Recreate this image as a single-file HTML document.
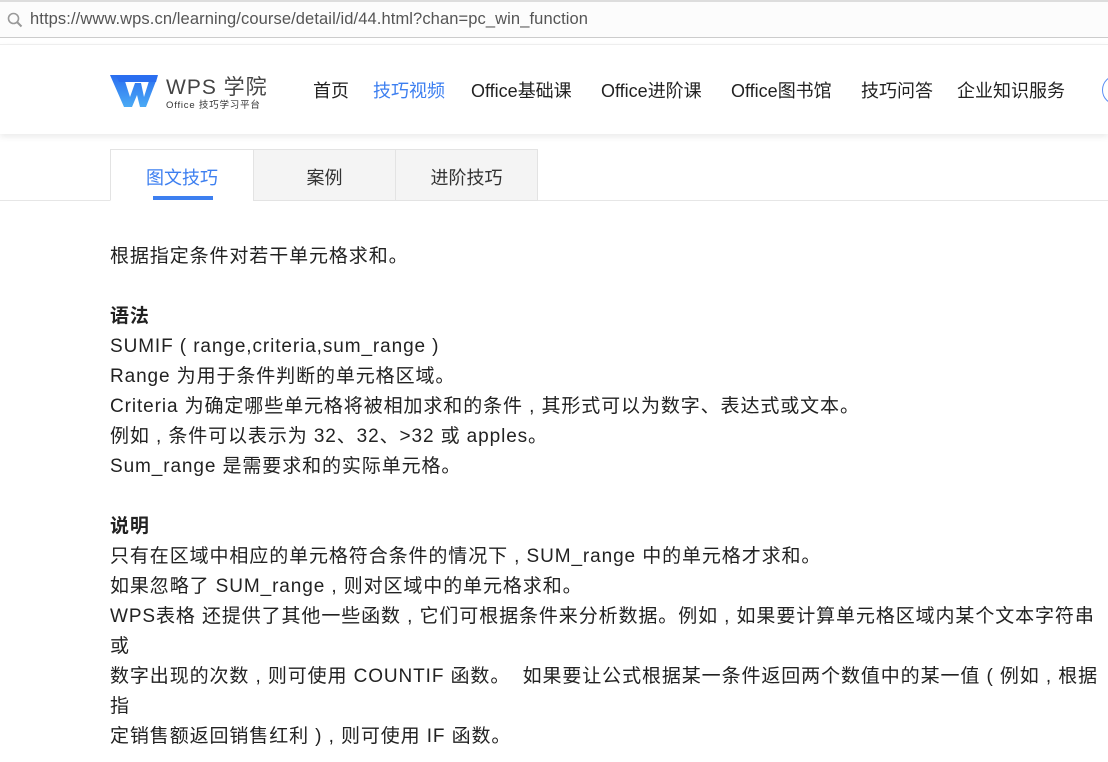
<!DOCTYPE html>
<html><head><meta charset="utf-8">
<style>
*{margin:0;padding:0;box-sizing:border-box}
html,body{width:1108px;height:762px;overflow:hidden;background:#fff;font-family:"Liberation Sans","Noto Sans CJK SC",sans-serif;color:#222}
.url{position:absolute;left:0;top:0;width:1108px;height:38px;background:#fcfcfc;border-top:2px solid #ddd;border-bottom:1px solid #ccc}
.url span{position:absolute;left:30px;top:8px;font-size:16.5px;color:#555;letter-spacing:0.1px}
.url svg{position:absolute;left:7px;top:10px}
.hdr{position:absolute;left:0;top:44px;width:1108px;height:90px;background:#fff;box-shadow:0 3px 6px rgba(0,0,0,0.08);border-top:1px solid #eee}
.nav{position:absolute;top:32px;font-size:18px;color:#222;white-space:nowrap}
.tabs{position:absolute;left:110px;top:149px;height:52px}
.tab{position:absolute;top:0;height:52px;border:1px solid #e3e3e3;background:#f4f4f4;font-size:18px;text-align:center;line-height:56px;color:#333}
.line{position:absolute;left:0;top:200px;width:1108px;height:1px;background:#e6e6e6}
.c{position:absolute;left:110px;font-size:19px;line-height:30px;white-space:nowrap;color:#222;letter-spacing:0.9px}
b{font-weight:bold}
</style></head><body>
<div class="url">
<svg width="16" height="16" viewBox="0 0 16 16"><circle cx="6.5" cy="6.5" r="5" fill="none" stroke="#999" stroke-width="1.6"/><line x1="10" y1="10" x2="14.5" y2="14.5" stroke="#999" stroke-width="2"/></svg>
<span>https://www.wps.cn/learning/course/detail/id/44.html?chan=pc_win_function</span></div>
<div class="hdr">
<svg style="position:absolute;left:110px;top:28px" width="50" height="36" viewBox="0 0 50 36">
<defs><linearGradient id="g" x1="0" y1="0" x2="0" y2="1"><stop offset="0" stop-color="#2a6ef0"/><stop offset="1" stop-color="#4aaaf5"/></linearGradient></defs>
<path d="M0 2 H13 L20 24 L25 10 H31 L34 24 L39 8 H46 L36 34 H30 L27 22 L22 34 H14 Z" fill="url(#g)"/>
<path d="M6 2 H48 L46 9 H9 Z" fill="#2a6ef0"/>
</svg>
<div style="position:absolute;left:166px;top:26px;font-size:21px;color:#444;letter-spacing:1px">WPS 学院</div>
<div style="position:absolute;left:166px;top:52px;font-size:9.5px;color:#333;letter-spacing:0.8px">Office 技巧学习平台</div>
<div class="nav" style="left:313px">首页</div>
<div class="nav" style="left:373px;color:#3d7ff0">技巧视频</div>
<div class="nav" style="left:471px">Office基础课</div>
<div class="nav" style="left:601px">Office进阶课</div>
<div class="nav" style="left:731px">Office图书馆</div>
<div class="nav" style="left:861px">技巧问答</div>
<div class="nav" style="left:957px">企业知识服务</div>
<div style="position:absolute;left:1102px;top:30px;width:30px;height:30px;border:1.5px solid #5b8ff5;border-radius:50%"></div>
</div>
<div class="line"></div>
<div class="tabs">
<div class="tab" style="left:0;width:144px;background:#fff;border-bottom:1px solid #fff;color:#3d7ff0">图文技巧<div style="position:absolute;left:42px;top:46px;width:60px;height:4px;background:#3d7ff0"></div></div>
<div class="tab" style="left:143px;width:143px">案例</div>
<div class="tab" style="left:285px;width:143px">进阶技巧</div>
</div>
<div class="c" style="top:242px">根据指定条件对若干单元格求和。</div>
<div class="c" style="top:302px"><b>语法</b></div>
<div class="c" style="top:332px">SUMIF ( range,criteria,sum_range )</div>
<div class="c" style="top:362px">Range 为用于条件判断的单元格区域。</div>
<div class="c" style="top:392px">Criteria 为确定哪些单元格将被相加求和的条件 , 其形式可以为数字、表达式或文本。</div>
<div class="c" style="top:422px">例如 , 条件可以表示为 32、32、&gt;32 或 apples。</div>
<div class="c" style="top:452px">Sum_range 是需要求和的实际单元格。</div>
<div class="c" style="top:512px"><b>说明</b></div>
<div class="c" style="top:542px">只有在区域中相应的单元格符合条件的情况下 , SUM_range 中的单元格才求和。</div>
<div class="c" style="top:572px">如果忽略了 SUM_range , 则对区域中的单元格求和。</div>
<div class="c" style="top:602px">WPS表格 还提供了其他一些函数 , 它们可根据条件来分析数据。例如 , 如果要计算单元格区域内某个文本字符串</div>
<div class="c" style="top:632px">或</div>
<div class="c" style="top:662px">数字出现的次数 , 则可使用 COUNTIF 函数。 &nbsp;如果要让公式根据某一条件返回两个数值中的某一值 ( 例如 , 根据</div>
<div class="c" style="top:692px">指</div>
<div class="c" style="top:722px">定销售额返回销售红利 ) , 则可使用 IF 函数。</div>
</body></html>
